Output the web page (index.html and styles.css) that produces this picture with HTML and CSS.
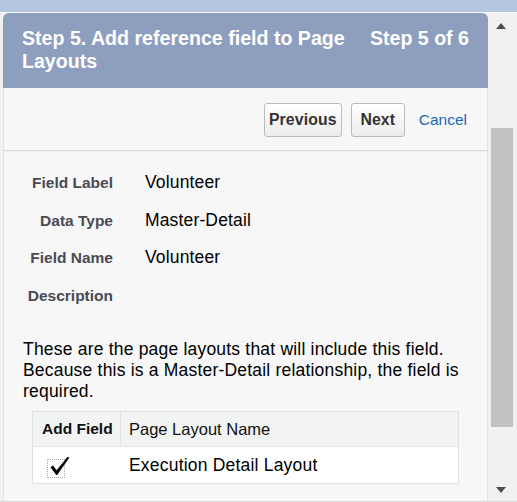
FILE: index.html
```html
<!DOCTYPE html>
<html>
<head>
<meta charset="utf-8">
<link rel="stylesheet" href="styles.css">
</head>
<body>
<div class="topband"></div>
<div class="frame">
  <div class="pane">
    <div class="dialog">
      <div class="header">
        <div class="title">Step 5. Add reference field to Page Layouts</div>
        <div class="step">Step 5 of 6</div>
      </div>
      <div class="toolbar">
        <button class="btn btn-prev">Previous</button>
        <button class="btn btn-next">Next</button>
        <a class="cancel">Cancel</a>
      </div>
      <div class="content">
        <div class="fields">
          <div class="row"><span class="label">Field Label</span><span class="value">Volunteer</span></div>
          <div class="row"><span class="label">Data Type</span><span class="value">Master-Detail</span></div>
          <div class="row"><span class="label">Field Name</span><span class="value">Volunteer</span></div>
          <div class="row"><span class="label">Description</span><span class="value"></span></div>
        </div>
        <p class="intro">These are the page layouts that will include this field. Because this is a Master-Detail relationship, the field is required.</p>
        <div class="table">
          <div class="thead">
            <div class="c1 th">Add Field</div>
            <div class="c2 th">Page Layout Name</div>
          </div>
          <div class="tbody">
            <div class="c1">
              <span class="checkbox">
                <svg class="check" width="20" height="20" viewBox="0 0 20 20"><path d="M0.5 11.2 L3 9.6 L6.6 14.2 L17.6 0.8 L19.3 1.8 L7.2 19 L6.2 19 Z" fill="#000"/></svg>
              </span>
            </div>
            <div class="c2 td">Execution Detail Layout</div>
          </div>
        </div>
      </div>
    </div>
  </div>
  <div class="scrollbar">
    <div class="arrow-up"></div>
    <div class="thumb"></div>
    <div class="track-rest"></div>
    <div class="arrow-down"></div>
  </div>
</div>
</body>
</html>
```

FILE: styles.css
```css
html, body {
  margin: 0;
  padding: 0;
}
body {
  width: 517px;
  height: 502px;
  overflow: hidden;
  background: #f1f1f1;
  font-family: "Liberation Sans", Arial, sans-serif;
}
.topband {
  height: 12px;
  background: #b3c6e0;
}
.frame {
  display: flex;
  height: 488px;
  border-top: 1px solid #f9f9f9;
  border-bottom: 1px solid #d9d9d9;
}
.pane {
  width: 486px;
  padding-left: 3px;
  display: flex;
}
.dialog {
  width: 485px;
  display: flex;
  flex-direction: column;
  border-radius: 6px 6px 0 0;
  overflow: hidden;
  background: #f7f7f7;
}
.header {
  height: 75px;
  box-sizing: border-box;
  padding: 14px 19px 0 19px;
  background: #8e9ebf;
  color: #fff;
  font-weight: bold;
  font-size: 19.6px;
  line-height: 23px;
  display: flex;
  gap: 6px;
}
.title {
  flex: 1 1 auto;
}
.step {
  flex: none;
  white-space: nowrap;
}
.toolbar {
  height: 63px;
  box-sizing: border-box;
  border-left: 1px solid #e2e2e2;
  border-right: 1px solid #e2e2e2;
  border-bottom: 1px solid #dadada;
  padding: 15px 20px 0 0;
  display: flex;
  justify-content: flex-end;
  align-items: flex-start;
}
.btn {
  height: 34px;
  padding: 0;
  margin-left: 9px;
  border: 1px solid #bbbbbb;
  border-radius: 3px;
  background: linear-gradient(#ffffff, #ececec);
  font-family: "Liberation Sans", Arial, sans-serif;
  font-weight: bold;
  font-size: 15.8px;
  letter-spacing: 0.1px;
  color: #333;
  text-align: center;
}
.btn-prev {
  width: 78px;
}
.btn-next {
  width: 54px;
}
.cancel {
  margin-left: 14px;
  line-height: 34px;
  font-size: 15.5px;
  color: #1a69b8;
}
.content {
  flex: 1;
  border-left: 1px solid #e2e2e2;
  border-right: 1px solid #e2e2e2;
  box-shadow: inset 0 1px 0 #efefef;
}
.fields {
  padding-top: 13px;
}
.row {
  display: flex;
  align-items: baseline;
  height: 37.5px;
  line-height: 37.5px;
}
.label {
  width: 109px;
  text-align: right;
  font-weight: bold;
  font-size: 15.5px;
  color: #4a4a55;
}
.value {
  margin-left: 32px;
  font-size: 17.5px;
  letter-spacing: 0.15px;
  color: #000;
}
.intro {
  margin: 25px 19px 0 19px;
  font-size: 17.5px;
  letter-spacing: 0.2px;
  line-height: 21px;
  color: #000;
}
.table {
  margin: 9px 0 0 28px;
  width: 427px;
  border: 1px solid #dfe2e3;
  box-sizing: border-box;
}
.thead {
  display: flex;
  height: 34px;
  background: #f2f3f3;
  border-bottom: 1px solid #e2e4e5;
}
.tbody {
  display: flex;
  height: 36px;
  background: #fff;
}
.c1 {
  width: 88px;
  box-sizing: border-box;
  border-right: 1px solid #e2e4e5;
  padding-left: 9px;
}
.tbody .c1 {
  border-right: none;
  padding-left: 14px;
  padding-top: 12px;
}
.c2 {
  flex: 1;
  padding-left: 8px;
}
.th {
  line-height: 34px;
  font-size: 16px;
  color: #111;
}
.thead .c1 {
  font-weight: bold;
  font-size: 15.5px;
}
.thead .c2 {
  font-size: 16.5px;
}
.td {
  line-height: 36px;
  font-size: 17.5px;
  letter-spacing: 0.2px;
  color: #000;
}
.checkbox {
  display: block;
  position: relative;
  width: 16px;
  height: 17px;
  border: 1px dotted #a8a8a8;
}
.check {
  position: absolute;
  left: 2px;
  top: -4px;
}
.scrollbar {
  width: 28px;
  display: flex;
  flex-direction: column;
  background: #f1f1f1;
}
.arrow-up {
  margin: 10px 0 0 7px;
  width: 0;
  height: 0;
  border-left: 5.5px solid transparent;
  border-right: 5.5px solid transparent;
  border-bottom: 6px solid #4d4d4d;
}
.thumb {
  margin: 99px 0 0 2px;
  width: 22px;
  height: 299px;
  background: #c1c1c1;
}
.track-rest {
  flex: 1;
}
.arrow-down {
  margin: 0 0 8px 7px;
  width: 0;
  height: 0;
  border-left: 5.5px solid transparent;
  border-right: 5.5px solid transparent;
  border-top: 6px solid #4d4d4d;
}
```
